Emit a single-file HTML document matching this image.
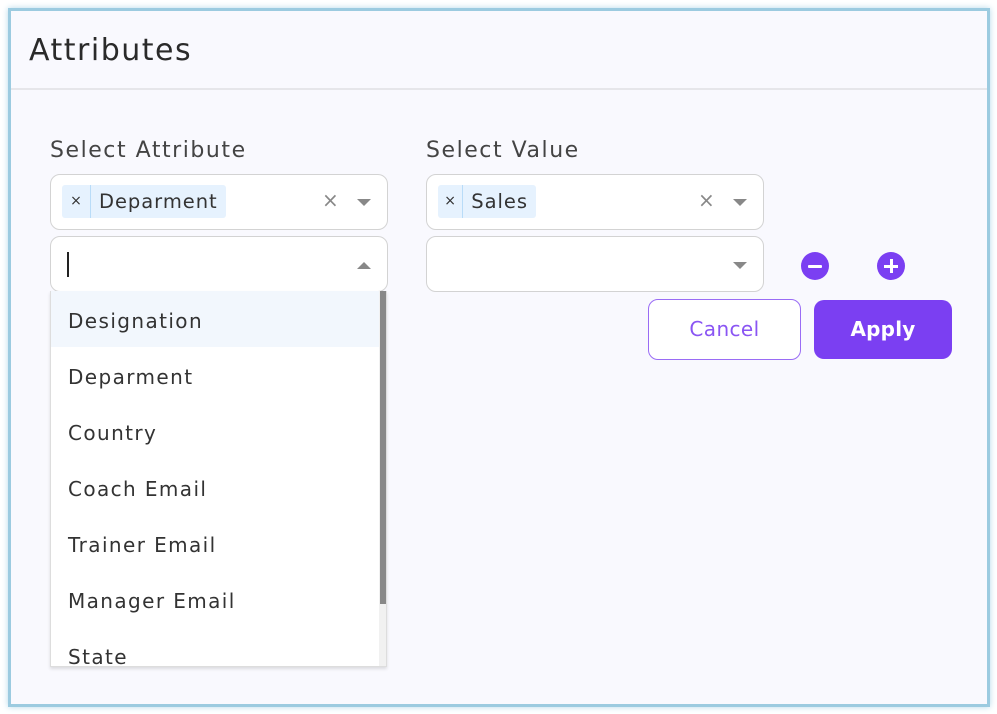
<html><head><style>
body{margin:0;width:997px;height:714px;background:#fff;font-family:"DejaVu Sans","Liberation Sans",sans-serif;letter-spacing:0.06em;position:relative;overflow:hidden}
.frame{position:absolute;left:8px;top:8px;width:976px;height:693px;border:3px solid #9ccbe0;background:#f9f9fe;box-shadow:0 0 6px #b5d9ea}
.abs{position:absolute}
.title{left:18px;top:22px;font-size:30px;color:#2a2a2a;letter-spacing:0.05em}
.sep{left:0;top:77px;width:976px;height:2px;background:#e6e6ea}
.lbl{font-size:22px;color:#444}
.box{background:#fff;border:1.5px solid #d3d3d3;border-radius:10px;box-sizing:border-box}
.tag{background:#e6f2fe;border-radius:3px;height:33px;font-size:19.5px;color:#333;display:flex;align-items:center}
.tag .x{width:28px;text-align:center;font-size:14px;border-right:1px solid #b9dcf8;height:33px;line-height:33px;letter-spacing:0}
.tag .t{padding:0 8px}
.caret{width:0;height:0;border-left:7px solid transparent;border-right:7px solid transparent;border-top:7px solid #888}
.up{border-top:none;border-bottom:7px solid #888}
.clr{font-size:20px;color:#888;letter-spacing:0}
.opt{position:absolute;left:0;width:328px;height:56px;line-height:60px;padding-left:17px;font-size:20px;color:#333;box-sizing:border-box;letter-spacing:0.07em}
.circ{width:28px;height:28px;border-radius:50%;background:#7b3ff2;color:#fff}
</style></head><body>
<div class="frame">
<div class="abs title">Attributes</div>
<div class="abs sep"></div>
</div>
<div class="abs lbl" style="left:50px;top:138px;letter-spacing:0.07em">Select Attribute</div>
<div class="abs lbl" style="left:426px;top:138px;letter-spacing:0.07em">Select Value</div>
<div class="abs box" style="left:50px;top:174px;width:338px;height:56px"></div>
<div class="abs tag" style="left:62px;top:185px;width:164px"><span class="x">×</span><span class="t">Deparment</span></div>
<div class="abs clr" style="left:322px;top:188px">×</div>
<div class="abs caret" style="left:357px;top:199px"></div>
<div class="abs box" style="left:50px;top:236px;width:338px;height:56px"></div>
<div class="abs" style="left:67px;top:252px;width:1.5px;height:25px;background:#222"></div>
<div class="abs caret up" style="left:357px;top:262px"></div>
<div class="abs box" style="left:426px;top:174px;width:338px;height:56px"></div>
<div class="abs tag" style="left:438px;top:185px;width:98px"><span class="x">×</span><span class="t">Sales</span></div>
<div class="abs clr" style="left:698px;top:188px">×</div>
<div class="abs caret" style="left:733px;top:199px"></div>
<div class="abs box" style="left:426px;top:236px;width:338px;height:56px"></div>
<div class="abs caret" style="left:733px;top:262px"></div>
<div class="abs" style="left:50px;top:291px;width:337px;height:376px;background:#fff;border:1px solid #ddd;border-top:none;box-sizing:border-box;overflow:hidden;box-shadow:0 2px 3px rgba(0,0,0,.12)">
<div class="opt" style="top:0;background:#f2f7fd">Designation</div>
<div class="opt" style="top:56px">Deparment</div>
<div class="opt" style="top:112px">Country</div>
<div class="opt" style="top:168px">Coach Email</div>
<div class="opt" style="top:224px">Trainer Email</div>
<div class="opt" style="top:280px">Manager Email</div>
<div class="opt" style="top:336px">State</div>
<div class="abs" style="left:328px;top:0;width:8px;height:376px;background:#f1f1f1"></div>
<div class="abs" style="left:329px;top:0;width:7px;height:313px;background:#888"></div>
</div>
<div class="abs circ" style="left:801px;top:252px"><div class="abs" style="left:7px;top:12.5px;width:14px;height:3px;background:#fff;border-radius:1px"></div></div>
<div class="abs circ" style="left:877px;top:252px"><div class="abs" style="left:7px;top:12.5px;width:14px;height:3px;background:#fff"></div><div class="abs" style="left:12.5px;top:7px;width:3px;height:14px;background:#fff"></div></div>
<div class="abs" style="left:648px;top:299px;width:153px;height:61px;border:1.5px solid #9a6cf5;border-radius:10px;box-sizing:border-box;background:#fff;color:#8a55f3;font-size:20px;text-align:center;line-height:58px;letter-spacing:0.02em">Cancel</div>
<div class="abs" style="left:814px;top:300px;width:138px;height:59px;border-radius:10px;background:#7b3ff2;color:#fff;font-size:20px;font-weight:bold;text-align:center;line-height:59px;letter-spacing:0.01em">Apply</div>
</body></html>
